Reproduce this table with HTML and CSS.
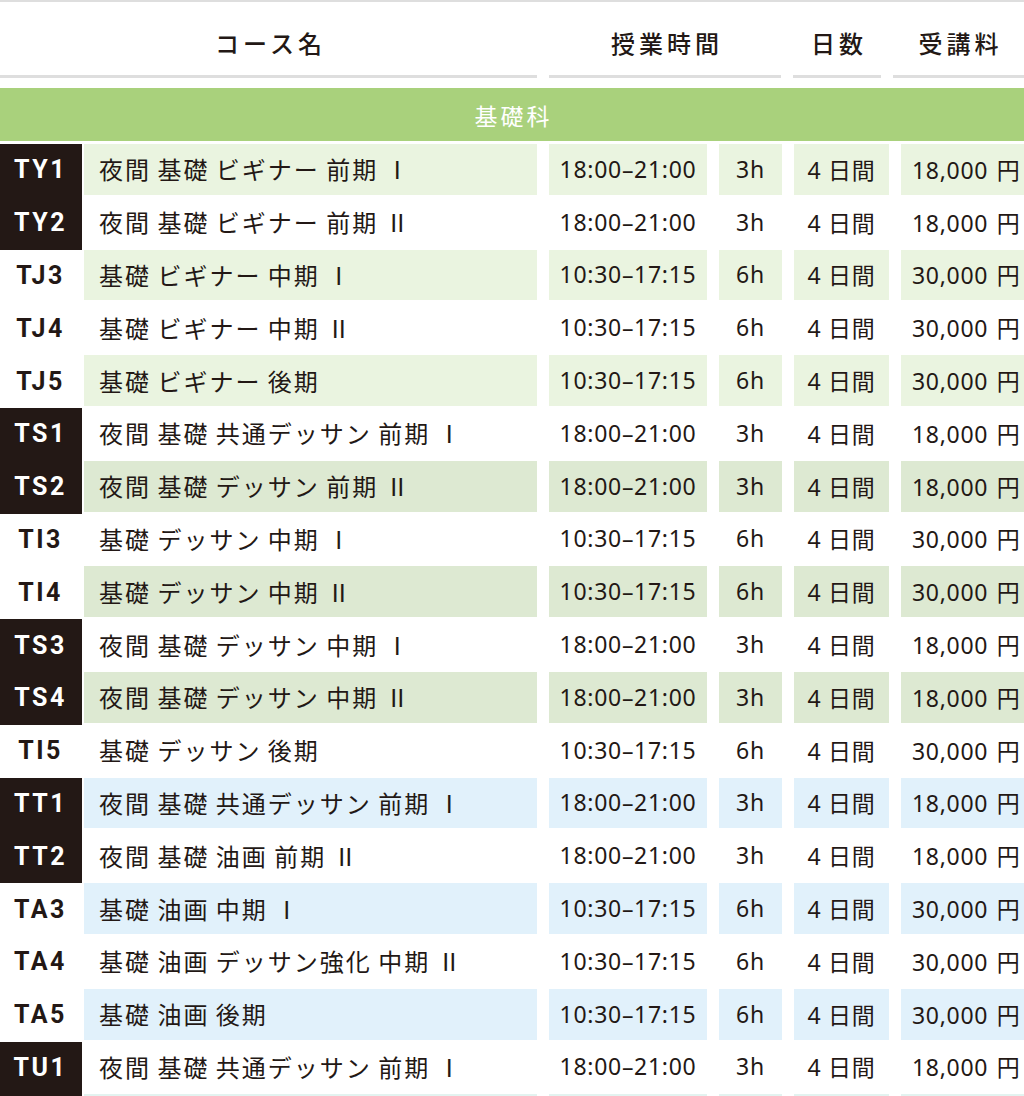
FILE: index.html
```html
<!DOCTYPE html>
<html lang="ja">
<head>
<meta charset="utf-8">
<title>基礎科 コース一覧</title>
<link rel="stylesheet" href="styles.css">
</head>
<body>
<div class="schedule">
  <div class="head">
    <div class="hcell">コース名</div>
    <div class="hcell">授業時間</div>
    <div class="hcell">日数</div>
    <div class="hcell">受講料</div>
  </div>
  <div class="band">基礎科</div>
  <div class="rows">
    <div class="row g1 night"><div class="main"><div class="code">TY1</div><div class="name">夜間 基礎 ビギナー 前期<span class="rn">Ⅰ</span></div></div><div class="c time">18:00–21:00</div><div class="c hrs">3h</div><div class="c days">4 日間</div><div class="c fee">18,000 円</div></div>
    <div class="row night"><div class="main"><div class="code">TY2</div><div class="name">夜間 基礎 ビギナー 前期<span class="rn">Ⅱ</span></div></div><div class="c time">18:00–21:00</div><div class="c hrs">3h</div><div class="c days">4 日間</div><div class="c fee">18,000 円</div></div>
    <div class="row g1"><div class="main"><div class="code">TJ3</div><div class="name">基礎 ビギナー 中期<span class="rn">Ⅰ</span></div></div><div class="c time">10:30–17:15</div><div class="c hrs">6h</div><div class="c days">4 日間</div><div class="c fee">30,000 円</div></div>
    <div class="row"><div class="main"><div class="code">TJ4</div><div class="name">基礎 ビギナー 中期<span class="rn">Ⅱ</span></div></div><div class="c time">10:30–17:15</div><div class="c hrs">6h</div><div class="c days">4 日間</div><div class="c fee">30,000 円</div></div>
    <div class="row g1"><div class="main"><div class="code">TJ5</div><div class="name">基礎 ビギナー 後期</div></div><div class="c time">10:30–17:15</div><div class="c hrs">6h</div><div class="c days">4 日間</div><div class="c fee">30,000 円</div></div>
    <div class="row night"><div class="main"><div class="code">TS1</div><div class="name">夜間 基礎 共通デッサン 前期<span class="rn">Ⅰ</span></div></div><div class="c time">18:00–21:00</div><div class="c hrs">3h</div><div class="c days">4 日間</div><div class="c fee">18,000 円</div></div>
    <div class="row g2 night"><div class="main"><div class="code">TS2</div><div class="name">夜間 基礎 デッサン 前期<span class="rn">Ⅱ</span></div></div><div class="c time">18:00–21:00</div><div class="c hrs">3h</div><div class="c days">4 日間</div><div class="c fee">18,000 円</div></div>
    <div class="row"><div class="main"><div class="code">TI3</div><div class="name">基礎 デッサン 中期<span class="rn">Ⅰ</span></div></div><div class="c time">10:30–17:15</div><div class="c hrs">6h</div><div class="c days">4 日間</div><div class="c fee">30,000 円</div></div>
    <div class="row g2"><div class="main"><div class="code">TI4</div><div class="name">基礎 デッサン 中期<span class="rn">Ⅱ</span></div></div><div class="c time">10:30–17:15</div><div class="c hrs">6h</div><div class="c days">4 日間</div><div class="c fee">30,000 円</div></div>
    <div class="row night"><div class="main"><div class="code">TS3</div><div class="name">夜間 基礎 デッサン 中期<span class="rn">Ⅰ</span></div></div><div class="c time">18:00–21:00</div><div class="c hrs">3h</div><div class="c days">4 日間</div><div class="c fee">18,000 円</div></div>
    <div class="row g2 night"><div class="main"><div class="code">TS4</div><div class="name">夜間 基礎 デッサン 中期<span class="rn">Ⅱ</span></div></div><div class="c time">18:00–21:00</div><div class="c hrs">3h</div><div class="c days">4 日間</div><div class="c fee">18,000 円</div></div>
    <div class="row"><div class="main"><div class="code">TI5</div><div class="name">基礎 デッサン 後期</div></div><div class="c time">10:30–17:15</div><div class="c hrs">6h</div><div class="c days">4 日間</div><div class="c fee">30,000 円</div></div>
    <div class="row b1 night"><div class="main"><div class="code">TT1</div><div class="name">夜間 基礎 共通デッサン 前期<span class="rn">Ⅰ</span></div></div><div class="c time">18:00–21:00</div><div class="c hrs">3h</div><div class="c days">4 日間</div><div class="c fee">18,000 円</div></div>
    <div class="row night"><div class="main"><div class="code">TT2</div><div class="name">夜間 基礎 油画 前期<span class="rn">Ⅱ</span></div></div><div class="c time">18:00–21:00</div><div class="c hrs">3h</div><div class="c days">4 日間</div><div class="c fee">18,000 円</div></div>
    <div class="row b1"><div class="main"><div class="code">TA3</div><div class="name">基礎 油画 中期<span class="rn">Ⅰ</span></div></div><div class="c time">10:30–17:15</div><div class="c hrs">6h</div><div class="c days">4 日間</div><div class="c fee">30,000 円</div></div>
    <div class="row"><div class="main"><div class="code">TA4</div><div class="name">基礎 油画 デッサン強化 中期<span class="rn">Ⅱ</span></div></div><div class="c time">10:30–17:15</div><div class="c hrs">6h</div><div class="c days">4 日間</div><div class="c fee">30,000 円</div></div>
    <div class="row b1"><div class="main"><div class="code">TA5</div><div class="name">基礎 油画 後期</div></div><div class="c time">10:30–17:15</div><div class="c hrs">6h</div><div class="c days">4 日間</div><div class="c fee">30,000 円</div></div>
    <div class="row night"><div class="main"><div class="code">TU1</div><div class="name">夜間 基礎 共通デッサン 前期<span class="rn">Ⅰ</span></div></div><div class="c time">18:00–21:00</div><div class="c hrs">3h</div><div class="c days">4 日間</div><div class="c fee">18,000 円</div></div>
    <div class="row m1 night" aria-hidden="true"><div class="main"><div class="code"></div><div class="name"></div></div><div class="c"></div><div class="c"></div><div class="c"></div><div class="c"></div></div>
  </div>
</div>
</body>
</html>
```
FILE: styles.css
```css
html, body {
  margin: 0;
  padding: 0;
  background: #ffffff;
}

body {
  color: #231815;
  font-family: "Noto Sans CJK JP", sans-serif;
}

.schedule {
  width: 1024px;
  border-top: 2px solid #dedede;
  overflow: hidden;
}

/* header */
.head {
  display: grid;
  grid-template-columns: 537px 232px 88px 1fr;
  column-gap: 12px;
  height: 76px;
}

.hcell {
  display: flex;
  align-items: center;
  justify-content: center;
  border-bottom: 3px solid #dedede;
  font-size: 24px;
  font-weight: 500;
  letter-spacing: 4px;
  padding-left: 4px;
  padding-top: 7px;
}

/* section band */
.band {
  margin-top: 10px;
  height: 53px;
  background: #a9d17c;
  color: #ffffff;
  display: flex;
  align-items: center;
  justify-content: center;
  font-size: 23px;
  letter-spacing: 3px;
  padding-left: 3px;
}

.rows {
  margin-top: 3px;
}

/* rows */
.row {
  display: grid;
  grid-template-columns: 537px 158px 63px 95px 1fr;
  column-gap: 12px;
  height: 52.8px;
}

.main {
  display: flex;
}

.code {
  width: 82px;
  flex: none;
  display: flex;
  align-items: center;
  justify-content: center;
  padding-right: 1px;
  padding-bottom: 1px;
  box-sizing: border-box;
  font-family: Roboto, "Noto Sans", sans-serif;
  font-weight: 700;
  font-size: 25px;
  letter-spacing: 2.5px;
}

.night .code {
  background: #231815;
  color: #ffffff;
}

.name,
.c {
  display: flex;
  align-items: center;
  border-bottom: 2.5px solid transparent;
  background-clip: padding-box;
  box-sizing: border-box;
  padding-bottom: 1px;
}

.name {
  flex: 1;
  margin-left: 2px;
  padding-left: 15px;
  font-size: 24px;
  letter-spacing: 2px;
  word-spacing: -1px;
  white-space: pre;
}

.rn {
  font-family: "Noto Sans CJK JP", sans-serif;
  font-size: 24px;
  margin-left: 7px;
  letter-spacing: 0;
}

.c {
  justify-content: center;
  font-family: "Noto Sans", "Noto Sans CJK JP", sans-serif;
  font-size: 23px;
  letter-spacing: 0.7px;
}

.days {
  word-spacing: 0;
}

.fee {
  justify-content: flex-start;
  padding-left: 11px;
  word-spacing: 2px;
}

.g1 .name, .g1 .c { background-color: #eaf4e0; }
.g2 .name, .g2 .c { background-color: #dde9d2; }
.b1 .name, .b1 .c { background-color: #e1f1fb; }
.m1 .name, .m1 .c { background-color: #e3f3f0; }
```
